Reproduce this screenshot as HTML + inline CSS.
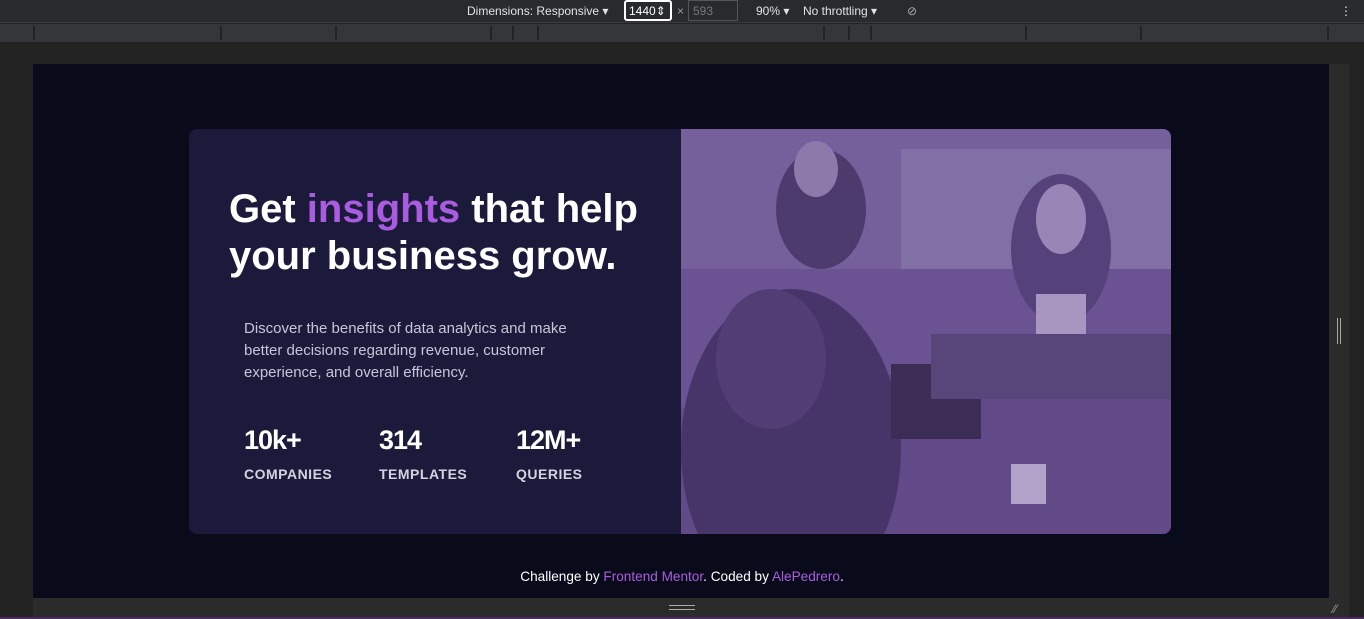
<!DOCTYPE html>
<html><head><style>
*{margin:0;padding:0;box-sizing:border-box}
body{width:1364px;height:619px;background:#232323;position:relative;overflow:hidden;font-family:"Liberation Sans",sans-serif}
.tb{position:absolute;left:0;top:0;width:1364px;height:23px;background:#292a2d;border-bottom:1px solid #3c3c3c;color:#e3e3e3;font-size:12px}
.tb span{position:absolute;top:4px}
.ruler{position:absolute;left:0;top:24px;width:1364px;height:18px;background:#35363a}
.ruler i{position:absolute;top:2px;width:2px;height:14px;background:#232323}
.page{position:absolute;left:33px;top:64px;width:1296px;height:534px;background:#090b1a}
.side{position:absolute;left:1329px;top:64px;width:20px;height:534px;background:#2b2b2b}
.bot{position:absolute;left:33px;top:598px;width:1316px;height:19px;background:#2b2b2b}
.pl{position:absolute;left:0;top:617px;width:1364px;height:2px;background:#4a2a66}
.card{position:absolute;left:189px;top:129px;width:982px;height:405px;background:#1c1a3a;border-radius:8px;overflow:hidden}
h1{position:absolute;left:40px;top:57px;color:#fff;font-size:40px;line-height:47px;font-weight:bold;white-space:nowrap}
h1 em{font-style:normal;color:#a95ce0}
p.d{position:absolute;left:55px;top:189px;width:360px;color:#c8c5d8;font-size:15px;line-height:22px}
.st{position:absolute;top:296px;color:#fff}
.st b{display:block;font-size:27px;letter-spacing:-1px}
.st s{display:block;text-decoration:none;margin-top:10px;font-size:14px;font-weight:bold;color:#d5d3e0;letter-spacing:0.5px}
.img{position:absolute;left:492px;top:0;width:490px;height:405px}
.foot{position:absolute;left:0;top:569px;width:1364px;text-align:center;color:#fff;font-size:13.6px}
.foot a{color:#a95ce0;text-decoration:none}
</style></head><body>
<div class="tb"><span style="left:467px">Dimensions: Responsive ▾</span>
<span style="left:624px;top:0;width:48px;height:21px;border:2px solid #fff;border-radius:3px;padding:2px 3px;color:#fff">1440⇕</span>
<span style="left:677px;color:#999">×</span>
<span style="left:688px;top:0;width:50px;height:21px;border:1px solid #555;padding:3px 4px;color:#777">593</span>
<span style="left:756px">90% ▾</span><span style="left:803px">No throttling ▾</span><span style="left:907px;color:#aaa">⊘</span><span style="left:1340px">⋮</span></div>
<div class="ruler"><i style="left:33px"></i><i style="left:220px"></i><i style="left:335px"></i><i style="left:490px"></i><i style="left:512px"></i><i style="left:537px"></i><i style="left:823px"></i><i style="left:848px"></i><i style="left:870px"></i><i style="left:1025px"></i><i style="left:1140px"></i><i style="left:1327px"></i></div>
<div class="page"></div><div class="side"><div style="position:absolute;left:8px;top:254px;width:4px;height:26px;border-left:1px solid #aaa;border-right:1px solid #aaa"></div></div>
<div class="bot"><div style="position:absolute;left:636px;top:7px;width:26px;height:5px;border-top:1px solid #aaa;border-bottom:1px solid #aaa"></div><div style="position:absolute;left:1300px;top:4px;color:#999;font-size:12px">⁄⁄</div></div>
<div class="pl"></div>
<div class="card">
<h1>Get <em>insights</em> that help<br>your business grow.</h1>
<p class="d">Discover the benefits of data analytics and make better decisions regarding revenue, customer experience, and overall efficiency.</p>
<div class="st" style="left:55px"><b>10k+</b><s>COMPANIES</s></div>
<div class="st" style="left:190px"><b>314</b><s>TEMPLATES</s></div>
<div class="st" style="left:327px"><b>12M+</b><s>QUERIES</s></div>
<svg class="img" viewBox="0 0 490 405">
<rect width="490" height="405" fill="#6b5393"/>
<rect x="0" y="0" width="490" height="140" fill="#75609c"/>
<rect x="220" y="20" width="270" height="120" fill="#8070a6"/>
<ellipse cx="140" cy="80" rx="45" ry="60" fill="#4e3b6e"/>
<ellipse cx="135" cy="40" rx="22" ry="28" fill="#8e79ab"/>
<ellipse cx="380" cy="120" rx="50" ry="75" fill="#55427a"/>
<ellipse cx="380" cy="90" rx="25" ry="35" fill="#9a86b6"/>
<rect x="355" y="165" width="50" height="60" fill="#a896c0"/>
<polygon points="0,280 300,230 490,260 490,405 0,405" fill="#614a87"/>
<ellipse cx="110" cy="320" rx="110" ry="160" fill="#47356a"/>
<ellipse cx="90" cy="230" rx="55" ry="70" fill="#523e74"/>
<rect x="210" y="235" width="90" height="75" fill="#3b2d55"/>
<rect x="250" y="205" width="240" height="65" fill="#58467a"/>
<rect x="330" y="335" width="35" height="40" fill="#b0a2c8"/>
</svg>
</div>
<div class="foot">Challenge by <a>Frontend Mentor</a>. Coded by <a>AlePedrero</a>.</div>
</body></html>
